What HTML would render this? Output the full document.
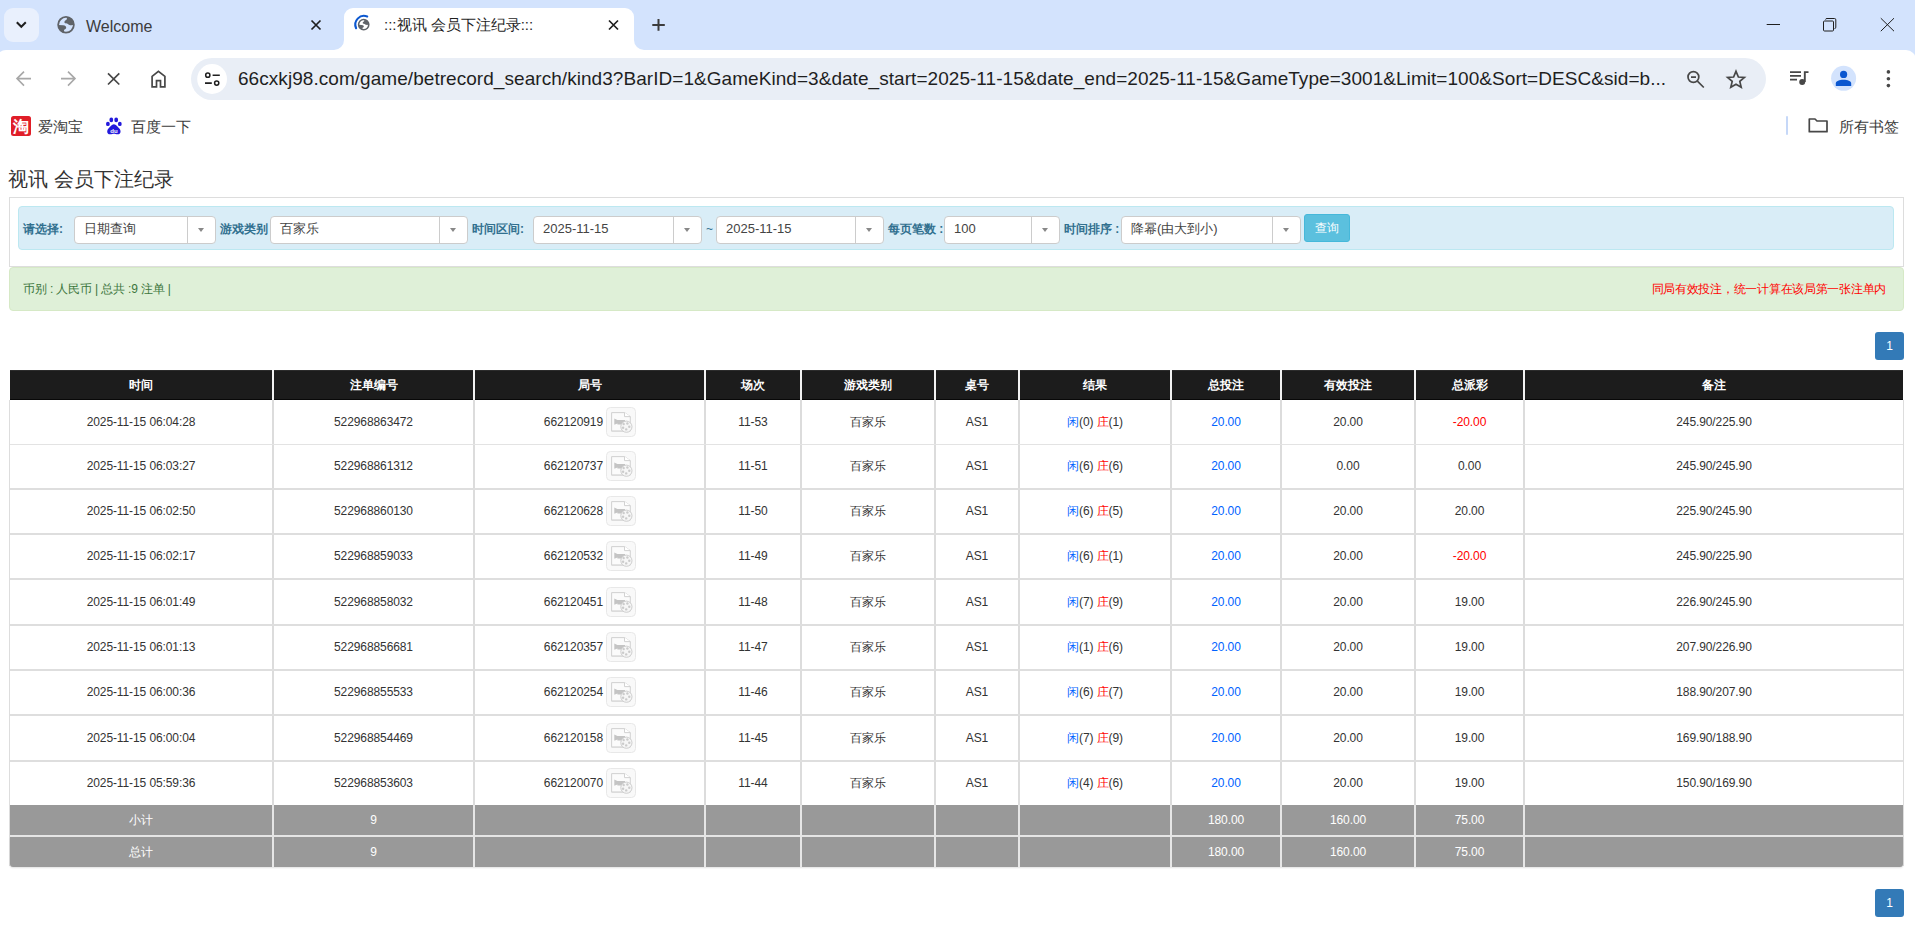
<!DOCTYPE html>
<html><head><meta charset="utf-8">
<style>
*{box-sizing:border-box;margin:0;padding:0}
html,body{width:1915px;height:943px;overflow:hidden;background:#fff;font-family:"Liberation Sans",sans-serif;position:relative}
.abs{position:absolute}
#tabstrip{left:0;top:0;width:1915px;height:62px;background:#d3e3fd}
#tabdd{left:4px;top:8px;width:35px;height:34px;border-radius:9px;background:#e9f0fd}
.tabtxt{font-size:15px;color:#3c3c3c;white-space:nowrap;line-height:20px}
#acttab{left:344px;top:8px;width:290px;height:42px;background:#fff;border-radius:9px 9px 0 0}
.flare{width:10px;height:10px;top:40px;background:#fff}
.flare:after{content:"";position:absolute;left:0;top:0;width:10px;height:10px;background:#d3e3fd}
#fl1{left:334px}
#fl1:after{border-bottom-right-radius:10px}
#fl2{left:634px}
#fl2:after{border-bottom-left-radius:10px}
#toolbar{left:-4px;top:50px;width:1920px;height:55px;background:#fff;border-radius:10px 10px 0 0}
#omni{left:191px;top:58px;width:1575px;height:42px;border-radius:21px;background:#e9eef6}
#url{left:238px;top:68px;font-size:19px;letter-spacing:0.05px;line-height:22px;color:#1f1f1f;white-space:nowrap}
.bm{font-size:15px;color:#3c3c3c;white-space:nowrap;line-height:20px}
/* page */
.pg{font-size:12px;color:#333;line-height:17px}
#title{left:8px;top:166px;font-size:20px;line-height:26px;color:#333;white-space:nowrap}
#panel{left:9px;top:197px;width:1895px;height:70px;border:1px solid #ddd;background:#fff}
#info{left:18px;top:206px;width:1876px;height:44px;border:1px solid #bce8f1;background:#d9edf7;border-radius:4px}
.lbl{font-size:12px;color:#31708f;font-weight:bold;white-space:nowrap;line-height:16px;top:221px}
.sel{top:216px;height:28px;border:1px solid #ccc;border-radius:4px;background:#fff}
.sel .t{position:absolute;left:9px;top:4px;font-size:13px;color:#444;white-space:nowrap;line-height:16px}
.sel .d{position:absolute;right:0;top:0;width:28px;height:26px;border-left:1px solid #ccc}
.sel .d:after{content:"";position:absolute;left:10px;top:11px;border-left:3.5px solid transparent;border-right:3.5px solid transparent;border-top:4px solid #888}
#btn{left:1304px;top:214px;width:46px;height:28px;background:#5bc0de;border:1px solid #46b8da;border-radius:3px;color:#fff;font-size:12px;line-height:26px;text-align:center}
#succ{left:9px;top:267px;width:1895px;height:44px;background:#dff0d8;border:1px solid #d6e9c6;border-radius:4px}
#succ .l{position:absolute;left:13px;top:13px;letter-spacing:-0.15px;color:#3c763d;font-size:12px;line-height:16px;white-space:nowrap}
#succ .r{position:absolute;right:17px;top:13px;letter-spacing:-0.28px;color:#ff0000;font-size:12px;line-height:16px;white-space:nowrap}
.pag{width:29px;height:28px;background:#337ab7;border-radius:3px;color:#fff;font-size:12px;line-height:28px;text-align:center}
.thead{left:10px;top:370px;width:1893px;height:30px;background:#1c1c1c;border-top:1px solid #2c2c2c;border-bottom:1px solid #080808}
.th{top:370px;height:30px;line-height:30px;text-align:center;color:#fff;font-weight:bold;font-size:12px;white-space:nowrap}
.td{text-align:center;color:#333;font-size:12px;white-space:nowrap;letter-spacing:-0.1px}
.tf{height:30px;line-height:30px;text-align:center;color:#fff;font-size:12px;white-space:nowrap;letter-spacing:-0.1px}
.bl{color:#0062ff}
.rd{color:#ff0000}
.jn{display:inline-block;vertical-align:middle;line-height:14px}
.vid{display:inline-block;vertical-align:middle;width:30px;height:30px;margin-left:4px;border:1px solid #e8e8e8;border-radius:4px;background:#f8f8f8;position:relative}
.vid svg{position:absolute;left:4px;top:4px}
</style></head>
<body>

<div id="tabstrip" class="abs"></div>
<div id="tabdd" class="abs"></div>
<div id="acttab" class="abs"></div>
<div id="fl1" class="abs flare"></div>
<div id="fl2" class="abs flare"></div>
<div class="abs tabtxt" style="left:86px;top:17px;font-size:16px">Welcome</div>
<div class="abs tabtxt" style="left:384px;top:15px;color:#1f1f1f">:::视讯 会员下注纪录:::</div>

<div id="toolbar" class="abs"></div>
<div id="omni" class="abs"></div>
<div id="url" class="abs">66cxkj98.com/game/betrecord_search/kind3?BarID=1&amp;GameKind=3&amp;date_start=2025-11-15&amp;date_end=2025-11-15&amp;GameType=3001&amp;Limit=100&amp;Sort=DESC&amp;sid=b...</div>

<div class="abs bm" style="left:38px;top:117px">爱淘宝</div>
<div class="abs bm" style="left:131px;top:117px">百度一下</div>
<div class="abs bm" style="left:1839px;top:117px">所有书签</div>

<!-- PAGE -->
<div id="title" class="abs">视讯 会员下注纪录</div>
<div id="panel" class="abs"></div>
<div id="info" class="abs"></div>
<div class="abs lbl" style="left:23px">请选择:</div>
<div class="abs sel" style="left:74px;width:142px"><span class="t">日期查询</span><span class="d"></span></div>
<div class="abs lbl" style="left:220px">游戏类别</div>
<div class="abs sel" style="left:270px;width:198px"><span class="t">百家乐</span><span class="d"></span></div>
<div class="abs lbl" style="left:472px">时间区间:</div>
<div class="abs sel" style="left:533px;width:169px"><span class="t">2025-11-15</span><span class="d"></span></div>
<div class="abs pg" style="left:706px;top:221px;color:#31708f">~</div>
<div class="abs sel" style="left:716px;width:168px"><span class="t">2025-11-15</span><span class="d"></span></div>
<div class="abs lbl" style="left:888px">每页笔数 :</div>
<div class="abs sel" style="left:944px;width:116px"><span class="t">100</span><span class="d"></span></div>
<div class="abs lbl" style="left:1064px">时间排序 :</div>
<div class="abs sel" style="left:1121px;width:180px"><span class="t">降幂(由大到小)</span><span class="d"></span></div>
<div id="btn" class="abs">查询</div>

<div id="succ" class="abs"><span class="l">币别 : 人民币 | 总共 :9 注单 |</span><span class="r">同局有效投注，统一计算在该局第一张注单内</span></div>

<div class="abs pag" style="left:1875px;top:332px">1</div>
<div class="abs pag" style="left:1875px;top:889px">1</div>

<svg class="abs" style="left:0;top:0" width="1915" height="150" viewBox="0 0 1915 150">
<!-- dropdown chevron -->
<path d="M16.8 22.3 L21.3 26.8 L25.8 22.3" fill="none" stroke="#1f1f1f" stroke-width="2"/>
<!-- globe inactive tab -->
<g transform="translate(66,24.8)">
<circle r="7.85" fill="none" stroke="#5f6368" stroke-width="1.8"/>
<path d="M1.06 -7.6 A7.7 7.7 0 0 1 7.7 0.1 L6.2 0.1 C5.5 0.6 4.5 0.6 3.5 0.3 C2.6 0 2.3 -0.9 1.5 -1.1 C0.8 -1.3 -0.6 -1.3 -1.2 -1.8 C-1.7 -2.3 -1.6 -3.4 -1.2 -3.9 C-0.8 -4.4 0.3 -4.6 0.6 -5.2 C0.8 -5.8 0.9 -6.5 1.06 -7.6 Z" fill="#5f6368"/>
<path d="M-7.7 0.3 L-2.9 0.5 C-1.8 0.6 -0.9 0.9 -0.4 1.5 C0.2 2.2 0.4 3.1 0 3.7 C-0.4 4.3 -1.3 4.4 -1.8 5 C-2.1 5.5 -2 6.3 -1.7 7.6 A7.7 7.7 0 0 1 -7.7 0.3 Z" fill="#5f6368"/>
</g>
<!-- close inactive -->
<path d="M311.5 20.5 L320.5 29.5 M320.5 20.5 L311.5 29.5" stroke="#1f1f1f" stroke-width="1.7"/>
<!-- spinner -->
<path d="M356.1 28.2 A8.7 8.7 0 0 1 367.2 16.5" fill="none" stroke="#0b57d0" stroke-width="2.1" stroke-linecap="round"/>
<g transform="translate(363.7,24.6) scale(0.64)">
<circle r="8" fill="none" stroke="#5f6368" stroke-width="2.4"/>
<path d="M1.06 -7.6 A7.7 7.7 0 0 1 7.7 0.1 L6.2 0.1 C5.5 0.6 4.5 0.6 3.5 0.3 C2.6 0 2.3 -0.9 1.5 -1.1 C0.8 -1.3 -0.6 -1.3 -1.2 -1.8 C-1.7 -2.3 -1.6 -3.4 -1.2 -3.9 C-0.8 -4.4 0.3 -4.6 0.6 -5.2 C0.8 -5.8 0.9 -6.5 1.06 -7.6 Z" fill="#5f6368"/>
<path d="M-7.7 0.3 L-2.9 0.5 C-1.8 0.6 -0.9 0.9 -0.4 1.5 C0.2 2.2 0.4 3.1 0 3.7 C-0.4 4.3 -1.3 4.4 -1.8 5 C-2.1 5.5 -2 6.3 -1.7 7.6 A7.7 7.7 0 0 1 -7.7 0.3 Z" fill="#5f6368"/>
</g>
<!-- close active -->
<path d="M609 20.5 L618 29.5 M618 20.5 L609 29.5" stroke="#1f1f1f" stroke-width="1.7"/>
<!-- plus -->
<path d="M652.3 24.9 H664.8 M658.5 19 V30.7" stroke="#3c3c3c" stroke-width="2"/>
<!-- window controls -->
<path d="M1766.7 24.5 H1780" stroke="#1f1f1f" stroke-width="1"/>
<rect x="1823.5" y="21" width="10" height="10" rx="1" fill="none" stroke="#1f1f1f" stroke-width="1"/>
<path d="M1825.5 19.5 Q1825.7 18.5 1827 18.5 H1834.5 Q1835.8 18.5 1835.8 19.8 V27.2 Q1835.8 28.6 1834.5 28.6" fill="none" stroke="#1f1f1f" stroke-width="1"/>
<path d="M1880.8 18.2 L1894 31.2 M1894 18.2 L1880.8 31.2" stroke="#1f1f1f" stroke-width="1"/>
<!-- back / fwd -->
<path d="M31 78.6 H17 M24 71.6 L17 78.6 L24 85.6" fill="none" stroke="#a8a8a8" stroke-width="1.6"/>
<path d="M61 78.6 H75 M68 71.6 L75 78.6 L68 85.6" fill="none" stroke="#a8a8a8" stroke-width="1.6"/>
<!-- stop -->
<path d="M108 73.3 L119.3 84.5 M119.3 73.3 L108 84.5" stroke="#474747" stroke-width="1.7"/>
<!-- home -->
<path d="M152.1 86.8 V76.3 L158.4 71.4 L164.9 76.3 V86.8 H160.5 V80.6 H156.5 V86.8 Z" fill="none" stroke="#474747" stroke-width="1.7" stroke-linejoin="miter"/>
<!-- info circle -->
<circle cx="212.1" cy="79" r="14.9" fill="#fff"/>
<circle cx="207.8" cy="75.2" r="2.1" fill="none" stroke="#1f1f1f" stroke-width="1.5"/>
<circle cx="216.7" cy="83.1" r="2.1" fill="none" stroke="#1f1f1f" stroke-width="1.5"/>
<path d="M212.6 75.2 H219.8 M205 83.1 H211.8" stroke="#1f1f1f" stroke-width="1.6"/>
<!-- zoom -->
<circle cx="1693.4" cy="77" r="5.4" fill="none" stroke="#474747" stroke-width="1.7"/>
<path d="M1691 77.1 H1696 M1697.4 81.2 L1703.8 87.5" stroke="#474747" stroke-width="1.7"/>
<!-- star -->
<path d="M1736 71.3 L1738.4 77 L1744.4 77.5 L1739.8 81.4 L1741.2 87.3 L1736 84.2 L1730.8 87.3 L1732.2 81.4 L1727.6 77.5 L1733.6 77 Z" fill="none" stroke="#474747" stroke-width="1.7" stroke-linejoin="miter"/>
<!-- media -->
<path d="M1790 72.1 H1801 M1790 75.9 H1801 M1790 79.7 H1797" stroke="#474747" stroke-width="1.7"/>
<path d="M1804.8 82 V72.1 H1808.5" fill="none" stroke="#474747" stroke-width="1.9"/>
<circle cx="1802.2" cy="82" r="3" fill="#474747"/>
<!-- profile -->
<circle cx="1843.6" cy="78.3" r="12.5" fill="#d3e3fd"/>
<circle cx="1843.6" cy="74.4" r="3.6" fill="#0b57d0"/>
<path d="M1835.8 86 V83.5 C1835.8 81 1839.5 79.8 1843.5 79.8 C1847.5 79.8 1851.2 81 1851.2 83.5 V86 Z" fill="#0b57d0"/>
<!-- menu -->
<circle cx="1888.4" cy="71.9" r="1.8" fill="#474747"/><circle cx="1888.4" cy="78.8" r="1.8" fill="#474747"/><circle cx="1888.4" cy="85.6" r="1.8" fill="#474747"/>
<!-- taobao -->
<rect x="11" y="116" width="20" height="20" rx="2.5" fill="#e01e28"/>
<text x="21" y="132.2" font-size="16" font-weight="bold" fill="#fff" text-anchor="middle" font-family="Liberation Sans, sans-serif">淘</text>
<!-- baidu -->
<g fill="#2319dc">
<ellipse cx="107.9" cy="123.9" rx="1.9" ry="2.2"/><ellipse cx="111.3" cy="119.9" rx="1.9" ry="2.4"/>
<ellipse cx="116.2" cy="119.9" rx="1.9" ry="2.4"/><ellipse cx="119.8" cy="123.9" rx="1.9" ry="2.2"/>
<path d="M113.9 124.2 C111.5 124.2 110.5 126.5 108.5 128.5 C106.5 130.5 106.8 134.3 110 134.3 C112 134.3 112.8 133.8 113.9 133.8 C115 133.8 115.8 134.3 117.8 134.3 C121 134.3 121.3 130.5 119.3 128.5 C117.3 126.5 116.3 124.2 113.9 124.2 Z"/>
</g>
<text x="113.9" y="133" font-size="6" font-weight="bold" fill="#fff" text-anchor="middle" font-family="Liberation Sans, sans-serif">du</text>
<!-- separator -->
<rect x="1786" y="116" width="2" height="19" rx="1" fill="#c6d8f8"/>
<!-- folder -->
<path d="M1809.3 119 H1815 L1817 121 H1827 V131.7 H1809.3 Z" fill="none" stroke="#474747" stroke-width="1.7" stroke-linejoin="round"/>
</svg>
<div class="abs thead"></div>
<div class="abs" style="left:272px;top:370px;width:2px;height:30px;background:#f2f2f2"></div>
<div class="abs" style="left:473px;top:370px;width:2px;height:30px;background:#f2f2f2"></div>
<div class="abs" style="left:704px;top:370px;width:2px;height:30px;background:#f2f2f2"></div>
<div class="abs" style="left:800px;top:370px;width:2px;height:30px;background:#f2f2f2"></div>
<div class="abs" style="left:934px;top:370px;width:2px;height:30px;background:#f2f2f2"></div>
<div class="abs" style="left:1018px;top:370px;width:2px;height:30px;background:#f2f2f2"></div>
<div class="abs" style="left:1170px;top:370px;width:2px;height:30px;background:#f2f2f2"></div>
<div class="abs" style="left:1280px;top:370px;width:2px;height:30px;background:#f2f2f2"></div>
<div class="abs" style="left:1414px;top:370px;width:2px;height:30px;background:#f2f2f2"></div>
<div class="abs" style="left:1523px;top:370px;width:2px;height:30px;background:#f2f2f2"></div>
<div class="abs th" style="left:10px;width:262px">时间</div>
<div class="abs th" style="left:274px;width:199px">注单编号</div>
<div class="abs th" style="left:475px;width:229px">局号</div>
<div class="abs th" style="left:706px;width:94px">场次</div>
<div class="abs th" style="left:802px;width:132px">游戏类别</div>
<div class="abs th" style="left:936px;width:82px">桌号</div>
<div class="abs th" style="left:1020px;width:150px">结果</div>
<div class="abs th" style="left:1172px;width:108px">总投注</div>
<div class="abs th" style="left:1282px;width:132px">有效投注</div>
<div class="abs th" style="left:1416px;width:107px">总派彩</div>
<div class="abs th" style="left:1525px;width:378px">备注</div>
<div class="abs" style="left:9px;top:400px;width:1px;height:466px;background:#ddd"></div>
<div class="abs" style="left:1903px;top:400px;width:1px;height:466px;background:#ddd"></div>
<div class="abs" style="left:272px;top:400px;width:2px;height:405px;background:#dcdcdc"></div>
<div class="abs" style="left:473px;top:400px;width:2px;height:405px;background:#dcdcdc"></div>
<div class="abs" style="left:704px;top:400px;width:2px;height:405px;background:#dcdcdc"></div>
<div class="abs" style="left:800px;top:400px;width:2px;height:405px;background:#dcdcdc"></div>
<div class="abs" style="left:934px;top:400px;width:2px;height:405px;background:#dcdcdc"></div>
<div class="abs" style="left:1018px;top:400px;width:2px;height:405px;background:#dcdcdc"></div>
<div class="abs" style="left:1170px;top:400px;width:2px;height:405px;background:#dcdcdc"></div>
<div class="abs" style="left:1280px;top:400px;width:2px;height:405px;background:#dcdcdc"></div>
<div class="abs" style="left:1414px;top:400px;width:2px;height:405px;background:#dcdcdc"></div>
<div class="abs" style="left:1523px;top:400px;width:2px;height:405px;background:#dcdcdc"></div>
<div class="abs" style="left:10px;top:444px;width:1893px;height:1px;background:#e3e3e3"></div>
<div class="abs" style="left:10px;top:488px;width:1893px;height:2px;background:#dedede"></div>
<div class="abs" style="left:10px;top:533px;width:1893px;height:2px;background:#dedede"></div>
<div class="abs" style="left:10px;top:578px;width:1893px;height:2px;background:#dedede"></div>
<div class="abs" style="left:10px;top:624px;width:1893px;height:2px;background:#dedede"></div>
<div class="abs" style="left:10px;top:669px;width:1893px;height:2px;background:#dedede"></div>
<div class="abs" style="left:10px;top:714px;width:1893px;height:2px;background:#dedede"></div>
<div class="abs" style="left:10px;top:760px;width:1893px;height:2px;background:#dedede"></div>
<div class="abs td" style="left:10px;top:400px;width:262px;height:44px;line-height:44px">2025-11-15 06:04:28</div>
<div class="abs td" style="left:274px;top:400px;width:199px;height:44px;line-height:44px">522968863472</div>
<div class="abs td" style="left:475px;top:400px;width:128px;height:44px;line-height:44px;text-align:right">662120919</div>
<svg class="abs" style="left:606px;top:407px" width="30" height="30" viewBox="0 0 30 30"><rect x="0.5" y="0.5" width="29" height="29" rx="4" fill="#f9f9f9" stroke="#e8e8e8" stroke-width="1"/>
<path d="M5.6 5.6 H18.5 L24.3 9.6 V24.1 H5.6 Z" fill="#fbfbfb" stroke="#cdcdcd" stroke-width="0.9"/>
<path d="M5.6 24.2 H19" stroke="#dcdcdc" stroke-width="1.4"/>
<path d="M18.5 5.6 V9.6 H24.3" fill="#fff" stroke="#cdcdcd" stroke-width="0.9"/>
<path d="M8.3 11.6 L11.4 13 H19 V17.6 H11.4 V16.4 L8.3 17.8 Z" fill="#c4c4c4"/>
<circle cx="20.4" cy="19.7" r="5.6" fill="#f6f6f6" stroke="#c8c8c8" stroke-width="0.9"/>
<g fill="#cbcbcb"><circle cx="17.7" cy="17.1" r="1.2"/><circle cx="21.4" cy="16.5" r="1.2"/><circle cx="23.3" cy="19.8" r="1.2"/><circle cx="20.2" cy="22.4" r="1.2"/><circle cx="17.1" cy="20.8" r="1.2"/></g></svg>
<div class="abs td" style="left:706px;top:400px;width:94px;height:44px;line-height:44px">11-53</div>
<div class="abs td" style="left:802px;top:400px;width:132px;height:44px;line-height:44px">百家乐</div>
<div class="abs td" style="left:936px;top:400px;width:82px;height:44px;line-height:44px">AS1</div>
<div class="abs td" style="left:1020px;top:400px;width:150px;height:44px;line-height:44px"><span class="bl">闲</span>(0) <span class="rd">庄</span>(1)</div>
<div class="abs td bl" style="left:1172px;top:400px;width:108px;height:44px;line-height:44px">20.00</div>
<div class="abs td" style="left:1282px;top:400px;width:132px;height:44px;line-height:44px">20.00</div>
<div class="abs td rd" style="left:1416px;top:400px;width:107px;height:44px;line-height:44px">-20.00</div>
<div class="abs td" style="left:1525px;top:400px;width:378px;height:44px;line-height:44px">245.90/225.90</div>
<div class="abs td" style="left:10px;top:445px;width:262px;height:43px;line-height:43px">2025-11-15 06:03:27</div>
<div class="abs td" style="left:274px;top:445px;width:199px;height:43px;line-height:43px">522968861312</div>
<div class="abs td" style="left:475px;top:445px;width:128px;height:43px;line-height:43px;text-align:right">662120737</div>
<svg class="abs" style="left:606px;top:451px" width="30" height="30" viewBox="0 0 30 30"><rect x="0.5" y="0.5" width="29" height="29" rx="4" fill="#f9f9f9" stroke="#e8e8e8" stroke-width="1"/>
<path d="M5.6 5.6 H18.5 L24.3 9.6 V24.1 H5.6 Z" fill="#fbfbfb" stroke="#cdcdcd" stroke-width="0.9"/>
<path d="M5.6 24.2 H19" stroke="#dcdcdc" stroke-width="1.4"/>
<path d="M18.5 5.6 V9.6 H24.3" fill="#fff" stroke="#cdcdcd" stroke-width="0.9"/>
<path d="M8.3 11.6 L11.4 13 H19 V17.6 H11.4 V16.4 L8.3 17.8 Z" fill="#c4c4c4"/>
<circle cx="20.4" cy="19.7" r="5.6" fill="#f6f6f6" stroke="#c8c8c8" stroke-width="0.9"/>
<g fill="#cbcbcb"><circle cx="17.7" cy="17.1" r="1.2"/><circle cx="21.4" cy="16.5" r="1.2"/><circle cx="23.3" cy="19.8" r="1.2"/><circle cx="20.2" cy="22.4" r="1.2"/><circle cx="17.1" cy="20.8" r="1.2"/></g></svg>
<div class="abs td" style="left:706px;top:445px;width:94px;height:43px;line-height:43px">11-51</div>
<div class="abs td" style="left:802px;top:445px;width:132px;height:43px;line-height:43px">百家乐</div>
<div class="abs td" style="left:936px;top:445px;width:82px;height:43px;line-height:43px">AS1</div>
<div class="abs td" style="left:1020px;top:445px;width:150px;height:43px;line-height:43px"><span class="bl">闲</span>(6) <span class="rd">庄</span>(6)</div>
<div class="abs td bl" style="left:1172px;top:445px;width:108px;height:43px;line-height:43px">20.00</div>
<div class="abs td" style="left:1282px;top:445px;width:132px;height:43px;line-height:43px">0.00</div>
<div class="abs td" style="left:1416px;top:445px;width:107px;height:43px;line-height:43px">0.00</div>
<div class="abs td" style="left:1525px;top:445px;width:378px;height:43px;line-height:43px">245.90/245.90</div>
<div class="abs td" style="left:10px;top:490px;width:262px;height:43px;line-height:43px">2025-11-15 06:02:50</div>
<div class="abs td" style="left:274px;top:490px;width:199px;height:43px;line-height:43px">522968860130</div>
<div class="abs td" style="left:475px;top:490px;width:128px;height:43px;line-height:43px;text-align:right">662120628</div>
<svg class="abs" style="left:606px;top:496px" width="30" height="30" viewBox="0 0 30 30"><rect x="0.5" y="0.5" width="29" height="29" rx="4" fill="#f9f9f9" stroke="#e8e8e8" stroke-width="1"/>
<path d="M5.6 5.6 H18.5 L24.3 9.6 V24.1 H5.6 Z" fill="#fbfbfb" stroke="#cdcdcd" stroke-width="0.9"/>
<path d="M5.6 24.2 H19" stroke="#dcdcdc" stroke-width="1.4"/>
<path d="M18.5 5.6 V9.6 H24.3" fill="#fff" stroke="#cdcdcd" stroke-width="0.9"/>
<path d="M8.3 11.6 L11.4 13 H19 V17.6 H11.4 V16.4 L8.3 17.8 Z" fill="#c4c4c4"/>
<circle cx="20.4" cy="19.7" r="5.6" fill="#f6f6f6" stroke="#c8c8c8" stroke-width="0.9"/>
<g fill="#cbcbcb"><circle cx="17.7" cy="17.1" r="1.2"/><circle cx="21.4" cy="16.5" r="1.2"/><circle cx="23.3" cy="19.8" r="1.2"/><circle cx="20.2" cy="22.4" r="1.2"/><circle cx="17.1" cy="20.8" r="1.2"/></g></svg>
<div class="abs td" style="left:706px;top:490px;width:94px;height:43px;line-height:43px">11-50</div>
<div class="abs td" style="left:802px;top:490px;width:132px;height:43px;line-height:43px">百家乐</div>
<div class="abs td" style="left:936px;top:490px;width:82px;height:43px;line-height:43px">AS1</div>
<div class="abs td" style="left:1020px;top:490px;width:150px;height:43px;line-height:43px"><span class="bl">闲</span>(6) <span class="rd">庄</span>(5)</div>
<div class="abs td bl" style="left:1172px;top:490px;width:108px;height:43px;line-height:43px">20.00</div>
<div class="abs td" style="left:1282px;top:490px;width:132px;height:43px;line-height:43px">20.00</div>
<div class="abs td" style="left:1416px;top:490px;width:107px;height:43px;line-height:43px">20.00</div>
<div class="abs td" style="left:1525px;top:490px;width:378px;height:43px;line-height:43px">225.90/245.90</div>
<div class="abs td" style="left:10px;top:535px;width:262px;height:43px;line-height:43px">2025-11-15 06:02:17</div>
<div class="abs td" style="left:274px;top:535px;width:199px;height:43px;line-height:43px">522968859033</div>
<div class="abs td" style="left:475px;top:535px;width:128px;height:43px;line-height:43px;text-align:right">662120532</div>
<svg class="abs" style="left:606px;top:541px" width="30" height="30" viewBox="0 0 30 30"><rect x="0.5" y="0.5" width="29" height="29" rx="4" fill="#f9f9f9" stroke="#e8e8e8" stroke-width="1"/>
<path d="M5.6 5.6 H18.5 L24.3 9.6 V24.1 H5.6 Z" fill="#fbfbfb" stroke="#cdcdcd" stroke-width="0.9"/>
<path d="M5.6 24.2 H19" stroke="#dcdcdc" stroke-width="1.4"/>
<path d="M18.5 5.6 V9.6 H24.3" fill="#fff" stroke="#cdcdcd" stroke-width="0.9"/>
<path d="M8.3 11.6 L11.4 13 H19 V17.6 H11.4 V16.4 L8.3 17.8 Z" fill="#c4c4c4"/>
<circle cx="20.4" cy="19.7" r="5.6" fill="#f6f6f6" stroke="#c8c8c8" stroke-width="0.9"/>
<g fill="#cbcbcb"><circle cx="17.7" cy="17.1" r="1.2"/><circle cx="21.4" cy="16.5" r="1.2"/><circle cx="23.3" cy="19.8" r="1.2"/><circle cx="20.2" cy="22.4" r="1.2"/><circle cx="17.1" cy="20.8" r="1.2"/></g></svg>
<div class="abs td" style="left:706px;top:535px;width:94px;height:43px;line-height:43px">11-49</div>
<div class="abs td" style="left:802px;top:535px;width:132px;height:43px;line-height:43px">百家乐</div>
<div class="abs td" style="left:936px;top:535px;width:82px;height:43px;line-height:43px">AS1</div>
<div class="abs td" style="left:1020px;top:535px;width:150px;height:43px;line-height:43px"><span class="bl">闲</span>(6) <span class="rd">庄</span>(1)</div>
<div class="abs td bl" style="left:1172px;top:535px;width:108px;height:43px;line-height:43px">20.00</div>
<div class="abs td" style="left:1282px;top:535px;width:132px;height:43px;line-height:43px">20.00</div>
<div class="abs td rd" style="left:1416px;top:535px;width:107px;height:43px;line-height:43px">-20.00</div>
<div class="abs td" style="left:1525px;top:535px;width:378px;height:43px;line-height:43px">245.90/225.90</div>
<div class="abs td" style="left:10px;top:580px;width:262px;height:44px;line-height:44px">2025-11-15 06:01:49</div>
<div class="abs td" style="left:274px;top:580px;width:199px;height:44px;line-height:44px">522968858032</div>
<div class="abs td" style="left:475px;top:580px;width:128px;height:44px;line-height:44px;text-align:right">662120451</div>
<svg class="abs" style="left:606px;top:587px" width="30" height="30" viewBox="0 0 30 30"><rect x="0.5" y="0.5" width="29" height="29" rx="4" fill="#f9f9f9" stroke="#e8e8e8" stroke-width="1"/>
<path d="M5.6 5.6 H18.5 L24.3 9.6 V24.1 H5.6 Z" fill="#fbfbfb" stroke="#cdcdcd" stroke-width="0.9"/>
<path d="M5.6 24.2 H19" stroke="#dcdcdc" stroke-width="1.4"/>
<path d="M18.5 5.6 V9.6 H24.3" fill="#fff" stroke="#cdcdcd" stroke-width="0.9"/>
<path d="M8.3 11.6 L11.4 13 H19 V17.6 H11.4 V16.4 L8.3 17.8 Z" fill="#c4c4c4"/>
<circle cx="20.4" cy="19.7" r="5.6" fill="#f6f6f6" stroke="#c8c8c8" stroke-width="0.9"/>
<g fill="#cbcbcb"><circle cx="17.7" cy="17.1" r="1.2"/><circle cx="21.4" cy="16.5" r="1.2"/><circle cx="23.3" cy="19.8" r="1.2"/><circle cx="20.2" cy="22.4" r="1.2"/><circle cx="17.1" cy="20.8" r="1.2"/></g></svg>
<div class="abs td" style="left:706px;top:580px;width:94px;height:44px;line-height:44px">11-48</div>
<div class="abs td" style="left:802px;top:580px;width:132px;height:44px;line-height:44px">百家乐</div>
<div class="abs td" style="left:936px;top:580px;width:82px;height:44px;line-height:44px">AS1</div>
<div class="abs td" style="left:1020px;top:580px;width:150px;height:44px;line-height:44px"><span class="bl">闲</span>(7) <span class="rd">庄</span>(9)</div>
<div class="abs td bl" style="left:1172px;top:580px;width:108px;height:44px;line-height:44px">20.00</div>
<div class="abs td" style="left:1282px;top:580px;width:132px;height:44px;line-height:44px">20.00</div>
<div class="abs td" style="left:1416px;top:580px;width:107px;height:44px;line-height:44px">19.00</div>
<div class="abs td" style="left:1525px;top:580px;width:378px;height:44px;line-height:44px">226.90/245.90</div>
<div class="abs td" style="left:10px;top:626px;width:262px;height:43px;line-height:43px">2025-11-15 06:01:13</div>
<div class="abs td" style="left:274px;top:626px;width:199px;height:43px;line-height:43px">522968856681</div>
<div class="abs td" style="left:475px;top:626px;width:128px;height:43px;line-height:43px;text-align:right">662120357</div>
<svg class="abs" style="left:606px;top:632px" width="30" height="30" viewBox="0 0 30 30"><rect x="0.5" y="0.5" width="29" height="29" rx="4" fill="#f9f9f9" stroke="#e8e8e8" stroke-width="1"/>
<path d="M5.6 5.6 H18.5 L24.3 9.6 V24.1 H5.6 Z" fill="#fbfbfb" stroke="#cdcdcd" stroke-width="0.9"/>
<path d="M5.6 24.2 H19" stroke="#dcdcdc" stroke-width="1.4"/>
<path d="M18.5 5.6 V9.6 H24.3" fill="#fff" stroke="#cdcdcd" stroke-width="0.9"/>
<path d="M8.3 11.6 L11.4 13 H19 V17.6 H11.4 V16.4 L8.3 17.8 Z" fill="#c4c4c4"/>
<circle cx="20.4" cy="19.7" r="5.6" fill="#f6f6f6" stroke="#c8c8c8" stroke-width="0.9"/>
<g fill="#cbcbcb"><circle cx="17.7" cy="17.1" r="1.2"/><circle cx="21.4" cy="16.5" r="1.2"/><circle cx="23.3" cy="19.8" r="1.2"/><circle cx="20.2" cy="22.4" r="1.2"/><circle cx="17.1" cy="20.8" r="1.2"/></g></svg>
<div class="abs td" style="left:706px;top:626px;width:94px;height:43px;line-height:43px">11-47</div>
<div class="abs td" style="left:802px;top:626px;width:132px;height:43px;line-height:43px">百家乐</div>
<div class="abs td" style="left:936px;top:626px;width:82px;height:43px;line-height:43px">AS1</div>
<div class="abs td" style="left:1020px;top:626px;width:150px;height:43px;line-height:43px"><span class="bl">闲</span>(1) <span class="rd">庄</span>(6)</div>
<div class="abs td bl" style="left:1172px;top:626px;width:108px;height:43px;line-height:43px">20.00</div>
<div class="abs td" style="left:1282px;top:626px;width:132px;height:43px;line-height:43px">20.00</div>
<div class="abs td" style="left:1416px;top:626px;width:107px;height:43px;line-height:43px">19.00</div>
<div class="abs td" style="left:1525px;top:626px;width:378px;height:43px;line-height:43px">207.90/226.90</div>
<div class="abs td" style="left:10px;top:671px;width:262px;height:43px;line-height:43px">2025-11-15 06:00:36</div>
<div class="abs td" style="left:274px;top:671px;width:199px;height:43px;line-height:43px">522968855533</div>
<div class="abs td" style="left:475px;top:671px;width:128px;height:43px;line-height:43px;text-align:right">662120254</div>
<svg class="abs" style="left:606px;top:677px" width="30" height="30" viewBox="0 0 30 30"><rect x="0.5" y="0.5" width="29" height="29" rx="4" fill="#f9f9f9" stroke="#e8e8e8" stroke-width="1"/>
<path d="M5.6 5.6 H18.5 L24.3 9.6 V24.1 H5.6 Z" fill="#fbfbfb" stroke="#cdcdcd" stroke-width="0.9"/>
<path d="M5.6 24.2 H19" stroke="#dcdcdc" stroke-width="1.4"/>
<path d="M18.5 5.6 V9.6 H24.3" fill="#fff" stroke="#cdcdcd" stroke-width="0.9"/>
<path d="M8.3 11.6 L11.4 13 H19 V17.6 H11.4 V16.4 L8.3 17.8 Z" fill="#c4c4c4"/>
<circle cx="20.4" cy="19.7" r="5.6" fill="#f6f6f6" stroke="#c8c8c8" stroke-width="0.9"/>
<g fill="#cbcbcb"><circle cx="17.7" cy="17.1" r="1.2"/><circle cx="21.4" cy="16.5" r="1.2"/><circle cx="23.3" cy="19.8" r="1.2"/><circle cx="20.2" cy="22.4" r="1.2"/><circle cx="17.1" cy="20.8" r="1.2"/></g></svg>
<div class="abs td" style="left:706px;top:671px;width:94px;height:43px;line-height:43px">11-46</div>
<div class="abs td" style="left:802px;top:671px;width:132px;height:43px;line-height:43px">百家乐</div>
<div class="abs td" style="left:936px;top:671px;width:82px;height:43px;line-height:43px">AS1</div>
<div class="abs td" style="left:1020px;top:671px;width:150px;height:43px;line-height:43px"><span class="bl">闲</span>(6) <span class="rd">庄</span>(7)</div>
<div class="abs td bl" style="left:1172px;top:671px;width:108px;height:43px;line-height:43px">20.00</div>
<div class="abs td" style="left:1282px;top:671px;width:132px;height:43px;line-height:43px">20.00</div>
<div class="abs td" style="left:1416px;top:671px;width:107px;height:43px;line-height:43px">19.00</div>
<div class="abs td" style="left:1525px;top:671px;width:378px;height:43px;line-height:43px">188.90/207.90</div>
<div class="abs td" style="left:10px;top:716px;width:262px;height:44px;line-height:44px">2025-11-15 06:00:04</div>
<div class="abs td" style="left:274px;top:716px;width:199px;height:44px;line-height:44px">522968854469</div>
<div class="abs td" style="left:475px;top:716px;width:128px;height:44px;line-height:44px;text-align:right">662120158</div>
<svg class="abs" style="left:606px;top:723px" width="30" height="30" viewBox="0 0 30 30"><rect x="0.5" y="0.5" width="29" height="29" rx="4" fill="#f9f9f9" stroke="#e8e8e8" stroke-width="1"/>
<path d="M5.6 5.6 H18.5 L24.3 9.6 V24.1 H5.6 Z" fill="#fbfbfb" stroke="#cdcdcd" stroke-width="0.9"/>
<path d="M5.6 24.2 H19" stroke="#dcdcdc" stroke-width="1.4"/>
<path d="M18.5 5.6 V9.6 H24.3" fill="#fff" stroke="#cdcdcd" stroke-width="0.9"/>
<path d="M8.3 11.6 L11.4 13 H19 V17.6 H11.4 V16.4 L8.3 17.8 Z" fill="#c4c4c4"/>
<circle cx="20.4" cy="19.7" r="5.6" fill="#f6f6f6" stroke="#c8c8c8" stroke-width="0.9"/>
<g fill="#cbcbcb"><circle cx="17.7" cy="17.1" r="1.2"/><circle cx="21.4" cy="16.5" r="1.2"/><circle cx="23.3" cy="19.8" r="1.2"/><circle cx="20.2" cy="22.4" r="1.2"/><circle cx="17.1" cy="20.8" r="1.2"/></g></svg>
<div class="abs td" style="left:706px;top:716px;width:94px;height:44px;line-height:44px">11-45</div>
<div class="abs td" style="left:802px;top:716px;width:132px;height:44px;line-height:44px">百家乐</div>
<div class="abs td" style="left:936px;top:716px;width:82px;height:44px;line-height:44px">AS1</div>
<div class="abs td" style="left:1020px;top:716px;width:150px;height:44px;line-height:44px"><span class="bl">闲</span>(7) <span class="rd">庄</span>(9)</div>
<div class="abs td bl" style="left:1172px;top:716px;width:108px;height:44px;line-height:44px">20.00</div>
<div class="abs td" style="left:1282px;top:716px;width:132px;height:44px;line-height:44px">20.00</div>
<div class="abs td" style="left:1416px;top:716px;width:107px;height:44px;line-height:44px">19.00</div>
<div class="abs td" style="left:1525px;top:716px;width:378px;height:44px;line-height:44px">169.90/188.90</div>
<div class="abs td" style="left:10px;top:762px;width:262px;height:43px;line-height:43px">2025-11-15 05:59:36</div>
<div class="abs td" style="left:274px;top:762px;width:199px;height:43px;line-height:43px">522968853603</div>
<div class="abs td" style="left:475px;top:762px;width:128px;height:43px;line-height:43px;text-align:right">662120070</div>
<svg class="abs" style="left:606px;top:768px" width="30" height="30" viewBox="0 0 30 30"><rect x="0.5" y="0.5" width="29" height="29" rx="4" fill="#f9f9f9" stroke="#e8e8e8" stroke-width="1"/>
<path d="M5.6 5.6 H18.5 L24.3 9.6 V24.1 H5.6 Z" fill="#fbfbfb" stroke="#cdcdcd" stroke-width="0.9"/>
<path d="M5.6 24.2 H19" stroke="#dcdcdc" stroke-width="1.4"/>
<path d="M18.5 5.6 V9.6 H24.3" fill="#fff" stroke="#cdcdcd" stroke-width="0.9"/>
<path d="M8.3 11.6 L11.4 13 H19 V17.6 H11.4 V16.4 L8.3 17.8 Z" fill="#c4c4c4"/>
<circle cx="20.4" cy="19.7" r="5.6" fill="#f6f6f6" stroke="#c8c8c8" stroke-width="0.9"/>
<g fill="#cbcbcb"><circle cx="17.7" cy="17.1" r="1.2"/><circle cx="21.4" cy="16.5" r="1.2"/><circle cx="23.3" cy="19.8" r="1.2"/><circle cx="20.2" cy="22.4" r="1.2"/><circle cx="17.1" cy="20.8" r="1.2"/></g></svg>
<div class="abs td" style="left:706px;top:762px;width:94px;height:43px;line-height:43px">11-44</div>
<div class="abs td" style="left:802px;top:762px;width:132px;height:43px;line-height:43px">百家乐</div>
<div class="abs td" style="left:936px;top:762px;width:82px;height:43px;line-height:43px">AS1</div>
<div class="abs td" style="left:1020px;top:762px;width:150px;height:43px;line-height:43px"><span class="bl">闲</span>(4) <span class="rd">庄</span>(6)</div>
<div class="abs td bl" style="left:1172px;top:762px;width:108px;height:43px;line-height:43px">20.00</div>
<div class="abs td" style="left:1282px;top:762px;width:132px;height:43px;line-height:43px">20.00</div>
<div class="abs td" style="left:1416px;top:762px;width:107px;height:43px;line-height:43px">19.00</div>
<div class="abs td" style="left:1525px;top:762px;width:378px;height:43px;line-height:43px">150.90/169.90</div>
<div class="abs" style="left:10px;top:805px;width:1893px;height:30px;background:#999"></div>
<div class="abs" style="left:10px;top:835px;width:1893px;height:2px;background:#e6e6e6"></div>
<div class="abs" style="left:10px;top:837px;width:1893px;height:30px;background:#999;border-radius:0 0 3px 3px;box-shadow:0 1px 2px rgba(0,0,0,0.12)"></div>
<div class="abs" style="left:272px;top:805px;width:2px;height:62px;background:#e6e6e6"></div>
<div class="abs" style="left:473px;top:805px;width:2px;height:62px;background:#e6e6e6"></div>
<div class="abs" style="left:704px;top:805px;width:2px;height:62px;background:#e6e6e6"></div>
<div class="abs" style="left:800px;top:805px;width:2px;height:62px;background:#e6e6e6"></div>
<div class="abs" style="left:934px;top:805px;width:2px;height:62px;background:#e6e6e6"></div>
<div class="abs" style="left:1018px;top:805px;width:2px;height:62px;background:#e6e6e6"></div>
<div class="abs" style="left:1170px;top:805px;width:2px;height:62px;background:#e6e6e6"></div>
<div class="abs" style="left:1280px;top:805px;width:2px;height:62px;background:#e6e6e6"></div>
<div class="abs" style="left:1414px;top:805px;width:2px;height:62px;background:#e6e6e6"></div>
<div class="abs" style="left:1523px;top:805px;width:2px;height:62px;background:#e6e6e6"></div>
<div class="abs tf" style="left:10px;top:805px;width:262px">小计</div>
<div class="abs tf" style="left:274px;top:805px;width:199px">9</div>
<div class="abs tf" style="left:1172px;top:805px;width:108px">180.00</div>
<div class="abs tf" style="left:1282px;top:805px;width:132px">160.00</div>
<div class="abs tf" style="left:1416px;top:805px;width:107px">75.00</div>
<div class="abs tf" style="left:10px;top:837px;width:262px">总计</div>
<div class="abs tf" style="left:274px;top:837px;width:199px">9</div>
<div class="abs tf" style="left:1172px;top:837px;width:108px">180.00</div>
<div class="abs tf" style="left:1282px;top:837px;width:132px">160.00</div>
<div class="abs tf" style="left:1416px;top:837px;width:107px">75.00</div>
</body></html>
